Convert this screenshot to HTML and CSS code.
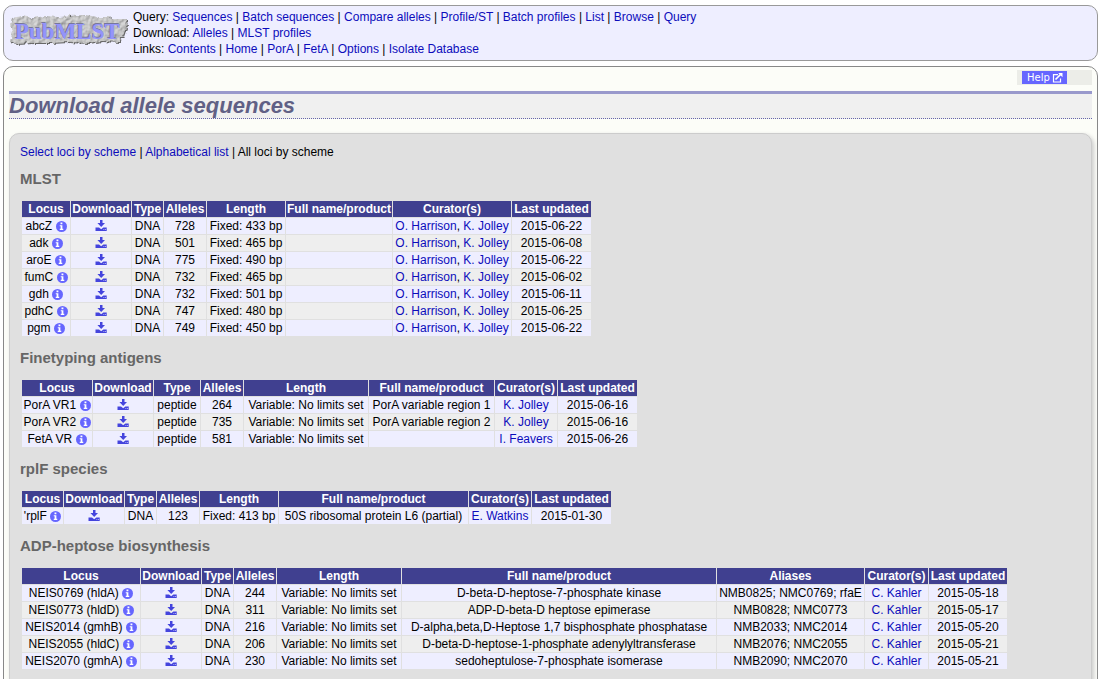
FILE: index.html
```
<!DOCTYPE html>
<html lang="en">
<head>
<meta charset="utf-8">
<title>Download allele sequences</title>
<link rel="stylesheet" href="styles.css">
<script src="loci.js" defer></script>
</head>
<body>
<svg class="sprite" aria-hidden="true">
  <symbol id="info" viewBox="0 0 10 10"><circle cx="5" cy="5" r="5"/><path fill="#fff" d="M4.1 1.4h1.7v1.5H4.1zM3.4 3.8h2.4v3.3h.8v1H3.4v-1h.8V4.8h-.8z"/></symbol>
  <symbol id="download" viewBox="0 0 12 11"><path d="M5 0h2.500v3h2.500L6.200 7 2.400 3H5zM.5 7.500h3.500L6.200 9.300l2.200-1.800h3.300V11H.5z"/><path fill="#eef" d="M8.500 9h.8v.8h-.8zM10 9h.8v.8H10z"/></symbol>
</svg>
<header class="banner">
  <svg class="logo" viewBox="0 0 122 36" role="img" aria-label="PubMLST">
    <defs>
      <filter id="rough" x="-5%" y="-15%" width="110%" height="130%" color-interpolation-filters="sRGB">
        <feTurbulence type="fractalNoise" baseFrequency="0.25" numOctaves="2" seed="4" result="n"/>
        <feDisplacementMap in="SourceGraphic" in2="n" scale="5" xChannelSelector="R" yChannelSelector="G" result="shape"/>
        <feDiffuseLighting in="n" surfaceScale="1" diffuseConstant="1" lighting-color="#dadada" result="light"><feDistantLight azimuth="225" elevation="65"/></feDiffuseLighting>
        <feComposite in="light" in2="shape" operator="in" result="stone"/>
        <feDropShadow in="stone" dx="1" dy="1" stdDeviation="0.4" flood-color="#666"/>
      </filter>
    </defs>
    <path filter="url(#rough)" fill="#bbb" d="M4 6 14 4 24 6 38 4 50 5 62 4 77 3 91 5 101 5 108 7 118 7 119 12 115 24 110 30 94 29 80 31 60 30 43 31 25 31 8 32 3 29 4 20 2 13z"/>
    <text class="logo-shade" x="6" y="26">PubMLST</text>
    <text class="logo-text" x="7" y="27">PubMLST</text>
  </svg>
  <nav class="menu">
    <div>Query: <a href="#">Sequences</a> | <a href="#">Batch sequences</a> | <a href="#">Compare alleles</a> | <a href="#">Profile/ST</a> | <a href="#">Batch profiles</a> | <a href="#">List</a> | <a href="#">Browse</a> | <a href="#">Query</a></div>
    <div>Download: <a href="#">Alleles</a> | <a href="#">MLST profiles</a></div>
    <div>Links: <a href="#">Contents</a> | <a href="#">Home</a> | <a href="#">PorA</a> | <a href="#">FetA</a> | <a href="#">Options</a> | <a href="#">Isolate Database</a></div>
  </nav>
</header>
<main class="page">
  <div class="toolbar"><div class="help-strip"><a class="help" href="#">Help <svg viewBox="0 0 11 10" aria-hidden="true"><path d="M6 1.700H1.500v7.300h7V5.500" fill="none" stroke="#fff" stroke-width="1.200"/><path d="M3.500 6.500 8.500 1.500" stroke="#fff" stroke-width="1.700"/><path d="M6.200 0H10.500v4.300z" fill="#fff"/></svg></a></div></div>
  <h1>Download allele sequences</h1>
  <div class="box">
    <p class="modes"><a href="#">Select loci by scheme</a> | <a href="#">Alphabetical list</a> | All loci by scheme</p>
    <div id="schemes"></div>
  </div>
</main>
</body>
</html>
```
FILE: styles.css
```
html { background: #fff; scrollbar-width: none; }
body { margin: 5px 3px 0; font: 12px/16px "Liberation Sans", Arial, sans-serif; color: #000; }
a { color: #0c0cbb; text-decoration: none; }
.sprite { display: none; }
.banner { display: flex; gap: 3px; padding: 3px 4px 3px 4px; border: 1px solid #999; border-radius: 10px; background: #eef; }
.logo { width: 122px; height: 36px; margin-top: 3px; flex: none; }
.logo text { font: bold 23px "Liberation Serif", serif; }
.logo-shade { fill: #77779c; }
.logo-text { fill: #9494fa; }
.page { margin-top: 5px; padding: 3px 5px 5px; border: 1px solid #888; border-radius: 10px; background: #fcfdf8; }
.toolbar { display: flex; justify-content: flex-end; }
.help-strip { box-sizing: border-box; width: 75px; height: 15px; padding: 1px 5px; background: #ecede8; display: flex; align-items: flex-start; }
.help { display: flex; align-items: center; gap: 2px; height: 13px; padding: 0 4px 0 5px; background: #66f; color: #fff; font: 10px/13px "DejaVu Sans", sans-serif; }
.help svg { width: 11px; height: 10px; }
h1 { margin: 6px 0 14px; border-top: 3px solid #99c; border-bottom: 1px dotted #66a; background: #f0f0f0; color: #606085; font-size: 22px; line-height: 24px; font-style: italic; }
.box { padding: 10px 10px 40px; border: 1px solid #ccc; border-radius: 10px; background: #e0e0e0; box-shadow: 2px 2px 4px #ccc; }
.modes { margin: 0 0 10px; }
h2 { margin: 0 0 12px; font-size: 15px; line-height: 18px; color: #666; }
table { table-layout: fixed; width: 0; margin: 0 0 12px 1px; border-spacing: 1px; text-align: center; white-space: nowrap; }
th, td { height: 16px; padding: 0; line-height: 16px; }
th { background: #404090; color: #fff; }
tbody tr:nth-child(odd) { background: #eef; }
tbody tr:nth-child(even) { background: #eee; }
.info { width: 11px; height: 11px; fill: #66f; vertical-align: -2px; }
.get { width: 12px; height: 11px; fill: #4444dd; vertical-align: -1px; }
```
FILE: loci.js
```
const schemes = [
  { name: "MLST", widths: [48, 60, 31, 42, 78, 106, 118, 79], rows: [
    ["abcZ", "DNA", 728, "Fixed: 433 bp", "", "O. Harrison, K. Jolley", "2015-06-22"],
    ["adk", "DNA", 501, "Fixed: 465 bp", "", "O. Harrison, K. Jolley", "2015-06-08"],
    ["aroE", "DNA", 775, "Fixed: 490 bp", "", "O. Harrison, K. Jolley", "2015-06-22"],
    ["fumC", "DNA", 732, "Fixed: 465 bp", "", "O. Harrison, K. Jolley", "2015-06-02"],
    ["gdh", "DNA", 732, "Fixed: 501 bp", "", "O. Harrison, K. Jolley", "2015-06-11"],
    ["pdhC", "DNA", 747, "Fixed: 480 bp", "", "O. Harrison, K. Jolley", "2015-06-25"],
    ["pgm", "DNA", 749, "Fixed: 450 bp", "", "O. Harrison, K. Jolley", "2015-06-22"]] },
  { name: "Finetyping antigens", widths: [70, 60, 46, 42, 124, 125, 62, 79], rows: [
    ["PorA VR1", "peptide", 264, "Variable: No limits set", "PorA variable region 1", "K. Jolley", "2015-06-16"],
    ["PorA VR2", "peptide", 735, "Variable: No limits set", "PorA variable region 2", "K. Jolley", "2015-06-16"],
    ["FetA VR", "peptide", 581, "Variable: No limits set", "", "I. Feavers", "2015-06-26"]] },
  { name: "rplF species", widths: [41, 60, 31, 42, 78, 189, 62, 79], rows: [
    ["'rplF", "DNA", 123, "Fixed: 413 bp", "50S ribosomal protein L6 (partial)", "E. Watkins", "2015-01-30"]] },
  { name: "ADP-heptose biosynthesis", aliases: true, widths: [118, 60, 31, 42, 124, 314, 147, 63, 78], rows: [
    ["NEIS0769 (hldA)", "DNA", 244, "Variable: No limits set", "D-beta-D-heptose-7-phosphate kinase", "NMB0825; NMC0769; rfaE", "C. Kahler", "2015-05-18"],
    ["NEIS0773 (hldD)", "DNA", 311, "Variable: No limits set", "ADP-D-beta-D heptose epimerase", "NMB0828; NMC0773", "C. Kahler", "2015-05-17"],
    ["NEIS2014 (gmhB)", "DNA", 216, "Variable: No limits set", "D-alpha,beta,D-Heptose 1,7 bisphosphate phosphatase", "NMB2033; NMC2014", "C. Kahler", "2015-05-20"],
    ["NEIS2055 (hldC)", "DNA", 206, "Variable: No limits set", "D-beta-D-heptose-1-phosphate adenylyltransferase", "NMB2076; NMC2055", "C. Kahler", "2015-05-21"],
    ["NEIS2070 (gmhA)", "DNA", 230, "Variable: No limits set", "sedoheptulose-7-phosphate isomerase", "NMB2090; NMC2070", "C. Kahler", "2015-05-21"]] }
];

const icon = (id, cls) => `<svg class="${cls}" aria-hidden="true"><use href="#${id}"/></svg>`;

document.getElementById("schemes").innerHTML = schemes.map(s => {
  const heads = ["Locus", "Download", "Type", "Alleles", "Length", "Full name/product",
    ...(s.aliases ? ["Aliases"] : []), "Curator(s)", "Last updated"];
  const body = s.rows.map(r => {
    const cells = r.slice(1).map((c, i, all) =>
      `<td>${i === all.length - 2 ? c.split(", ").map(n => `<a href="#">${n}</a>`).join(", ") : c}</td>`).join("");
    return `<tr><td>${r[0]} <a href="#" aria-label="Information">${icon("info", "info")}</a></td>
      <td><a href="#" aria-label="Download">${icon("download", "get")}</a></td>${cells}</tr>`;
  }).join("");
  return `<h2>${s.name}</h2><table>
    <colgroup>${s.widths.map(w => `<col style="width:${w}px">`).join("")}</colgroup>
    <thead><tr>${heads.map(h => `<th scope="col">${h}</th>`).join("")}</tr></thead>
    <tbody>${body}</tbody></table>`;
}).join("");
```
